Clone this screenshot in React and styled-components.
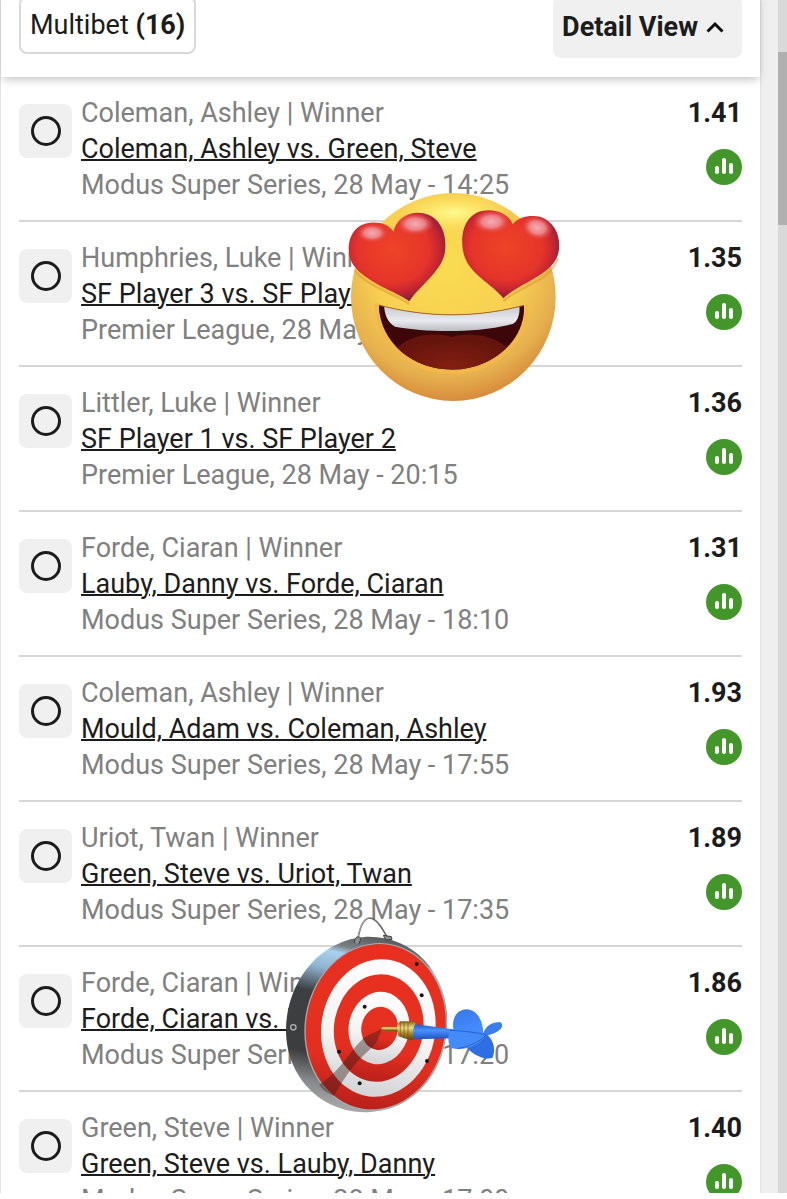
import { useState } from "react";
import styled, { createGlobalStyle } from "styled-components";

const bets = [
  { id: 1, pick: "Coleman, Ashley", match: "Coleman, Ashley vs. Green, Steve", info: "Modus Super Series, 28 May - 14:25", odds: "1.41" },
  { id: 2, pick: "Humphries, Luke", match: "SF Player 3 vs. SF Player 4", info: "Premier League, 28 May - 19:15", odds: "1.35" },
  { id: 3, pick: "Littler, Luke", match: "SF Player 1 vs. SF Player 2", info: "Premier League, 28 May - 20:15", odds: "1.36" },
  { id: 4, pick: "Forde, Ciaran", match: "Lauby, Danny vs. Forde, Ciaran", info: "Modus Super Series, 28 May - 18:10", odds: "1.31" },
  { id: 5, pick: "Coleman, Ashley", match: "Mould, Adam vs. Coleman, Ashley", info: "Modus Super Series, 28 May - 17:55", odds: "1.93" },
  { id: 6, pick: "Uriot, Twan", match: "Green, Steve vs. Uriot, Twan", info: "Modus Super Series, 28 May - 17:35", odds: "1.89" },
  { id: 7, pick: "Forde, Ciaran", match: "Forde, Ciaran vs. Lauby, D", info: "Modus Super Series, 28 May - 17:20", odds: "1.86" },
  { id: 8, pick: "Green, Steve", match: "Green, Steve vs. Lauby, Danny", info: "Modus Super Series, 28 May - 17:00", odds: "1.40" },
];

const HeartEyes = () => (
  <svg viewBox="0 0 750 705" width="250" height="235" aria-hidden="true">
    <defs>
      <radialGradient id="skin" cx="0.47" cy="0.34" r="0.7">
        <stop offset="0" stopColor="#f9dc50" />
        <stop offset="0.5" stopColor="#f8d052" />
        <stop offset="0.78" stopColor="#e6b04e" />
        <stop offset="0.93" stopColor="#d98f3c" />
        <stop offset="1" stopColor="#cc7830" />
      </radialGradient>
      <radialGradient id="shine" cx="0.5" cy="0.5" r="0.5">
        <stop offset="0" stopColor="#fffa90" />
        <stop offset="1" stopColor="#fff06a" stopOpacity="0" />
      </radialGradient>
      <radialGradient id="heart" cx="0.46" cy="0.42" r="0.62">
        <stop offset="0" stopColor="#ee4427" />
        <stop offset="0.6" stopColor="#e5342a" />
        <stop offset="0.76" stopColor="#c92630" />
        <stop offset="0.9" stopColor="#98203a" />
        <stop offset="1" stopColor="#6c1a3c" />
      </radialGradient>
      <radialGradient id="gloss" cx="0.5" cy="0.5" r="0.5">
        <stop offset="0" stopColor="#f3aeb4" />
        <stop offset="0.5" stopColor="#ef9198" stopOpacity="0.85" />
        <stop offset="1" stopColor="#e5443d" stopOpacity="0" />
      </radialGradient>
      <linearGradient id="teeth" x1="0" x2="0" y1="0" y2="1">
        <stop offset="0" stopColor="#c3c6cb" />
        <stop offset="0.6" stopColor="#e9ebee" />
        <stop offset="1" stopColor="#b9bbc2" />
      </linearGradient>
      <radialGradient id="tongue" cx="0.5" cy="0.7" r="0.6">
        <stop offset="0" stopColor="#841f12" />
        <stop offset="1" stopColor="#64140c" />
      </radialGradient>
      <clipPath id="mouthClip">
        <path d="M146 375C290 414 440 414 582 376C588 485 480 569 369 569C250 569 150 490 146 375Z" />
      </clipPath>
    </defs>
    <ellipse cx="370" cy="351" rx="307" ry="312" fill="url(#skin)" />
    <ellipse cx="372" cy="98" rx="165" ry="56" fill="url(#shine)" />
    <path d="M238 372C200 343 110 318 72 270M520 363C570 320 665 300 683 235" fill="none" stroke="#d9922e" strokeWidth="8" opacity="0.45" />
    <path d="M138 370C142 500 250 577 369 577C490 577 592 492 591 371" fill="none" stroke="#f4b849" strokeWidth="9" />
    <g clipPath="url(#mouthClip)">
      <rect x="130" y="360" width="470" height="220" fill="#3d0709" />
      <path d="M190 520C225 460 325 455 365 471C405 455 505 460 545 520L540 600H190Z" fill="url(#tongue)" />
      <path d="M162 374C290 410 440 410 568 376C571 400 564 424 548 432C430 461 290 457 195 440C174 428 163 405 162 374Z" fill="url(#teeth)" />
    </g>
    <path d="M146 375C290 414 440 414 582 376" fill="none" stroke="#a96a23" strokeWidth="3" />
    <path d="M238 364C200 335 110 310 70 255C42 210 57 145 105 131C140 122 175 130 190 155C200 115 240 92 280 100C330 110 352 160 345 215C336 275 270 315 238 364Z" fill="url(#heart)" />
    <path d="M520 355C485 310 420 285 402 225C386 165 405 105 455 93C500 84 538 105 548 133C565 110 600 104 630 110C680 128 694 175 685 220C668 285 570 308 520 355Z" fill="url(#heart)" />
    <ellipse cx="127" cy="159" rx="47" ry="29" fill="url(#gloss)" />
    <ellipse cx="256" cy="132" rx="57" ry="34" fill="url(#gloss)" />
    <ellipse cx="484" cy="125" rx="57" ry="35" fill="url(#gloss)" />
    <ellipse cx="622" cy="143" rx="48" ry="36" fill="url(#gloss)" transform="rotate(15 622 143)" />
  </svg>
);

const DartBoard = () => (
  <svg viewBox="0 0 750 660" width="250" height="220" aria-hidden="true">
    <defs>
      <linearGradient id="rim" x1="0.5" x2="0.3" y1="0" y2="1">
        <stop offset="0" stopColor="#5c6064" />
        <stop offset="0.08" stopColor="#7b8085" />
        <stop offset="0.12" stopColor="#a9d0ee" />
        <stop offset="0.22" stopColor="#8fb4d0" />
        <stop offset="0.36" stopColor="#3d4043" />
        <stop offset="0.7" stopColor="#3c3d3e" />
        <stop offset="0.85" stopColor="#858687" />
        <stop offset="1" stopColor="#b0b0b0" />
      </linearGradient>
      <linearGradient id="red" x1="0" x2="0" y1="0" y2="1">
        <stop offset="0" stopColor="#e7301f" />
        <stop offset="0.7" stopColor="#e42f20" />
        <stop offset="1" stopColor="#b9201a" />
      </linearGradient>
      <linearGradient id="white" x1="0" x2="0" y1="0" y2="1">
        <stop offset="0" stopColor="#fff" />
        <stop offset="0.6" stopColor="#f3f3f3" />
        <stop offset="1" stopColor="#d2d3d5" />
      </linearGradient>
      <linearGradient id="brass" x1="0" x2="0" y1="0" y2="1">
        <stop offset="0" stopColor="#82651c" />
        <stop offset="0.35" stopColor="#f2dc82" />
        <stop offset="0.65" stopColor="#a88526" />
        <stop offset="1" stopColor="#5a4410" />
      </linearGradient>
      <linearGradient id="shaft" x1="0" x2="0" y1="0" y2="1">
        <stop offset="0" stopColor="#2259c4" />
        <stop offset="0.4" stopColor="#4a92ff" />
        <stop offset="1" stopColor="#1e52bb" />
      </linearGradient>
      <linearGradient id="fin" x1="0" x2="0.4" y1="0" y2="1">
        <stop offset="0" stopColor="#3577e8" />
        <stop offset="1" stopColor="#458dff" />
      </linearGradient>
    </defs>
    <path d="M290 95C140 104 48 240 48 375C48 520 160 630 300 621C450 610 531 480 531 345C530 200 430 92 290 95Z" fill="url(#rim)" />
    <path d="M262 112C268 70 280 40 299 39C320 40 337 70 352 97" fill="none" stroke="#66686a" strokeWidth="5" />
    <path d="M262 110C267 72 279 39 299 38" fill="none" stroke="#c5c7c9" strokeWidth="2" />
    <path d="M254 115C252 98 262 91 272 99C271 108 268 113 266 118M340 91L364 95L366 103L347 105Z" fill="#8b8e90" stroke="#3f4143" strokeWidth="3" />
    <ellipse cx="317" cy="366" rx="213" ry="253" transform="rotate(9 317 366)" fill="#a5abb0" />
    <ellipse cx="317" cy="365" rx="209" ry="249" transform="rotate(9 317 365)" fill="url(#red)" />
    <ellipse cx="325" cy="369" rx="171" ry="207" transform="rotate(9 325 369)" fill="url(#white)" />
    <ellipse cx="326" cy="369" rx="134" ry="162" transform="rotate(9 326 369)" fill="url(#red)" />
    <ellipse cx="327" cy="369" rx="91" ry="109" transform="rotate(9 327 369)" fill="url(#white)" />
    <ellipse cx="329" cy="370" rx="55" ry="65" transform="rotate(9 329 370)" fill="url(#red)" />
    <path d="M335 371L312 383C284 390 270 410 250 433C218 477 182 520 148 538C155 554 174 566 192 573C210 545 220 520 256 477C286 442 321 421 326 397Z" fill="#371b1b" opacity="0.42" />
    <circle cx="70" cy="367" r="8" fill="#404142" stroke="#b1b1b1" strokeWidth="4" />
    <g fill="#171717">
      <circle cx="440" cy="177" r="6" />
      <circle cx="455" cy="271" r="6" />
      <circle cx="284" cy="305" r="6" />
      <circle cx="207" cy="440" r="6" />
      <circle cx="269" cy="535" r="6" />
      <circle cx="471" cy="468" r="6" />
    </g>
    <path d="M333 370L340 364L385 366V379L340 377Z" fill="url(#brass)" />
    <path d="M381 359L390 349L432 349L440 359L434 403L419 405L385 394Z" fill="url(#brass)" />
    <path d="M391 351V394M402 350V399M414 350V402" stroke="#765718" strokeWidth="2" />
    <path d="M436 358L550 373L640 382V393L545 400L432 403C428 388 428 371 436 358Z" fill="url(#shaft)" />
    <path d="M588 425C615 397 635 388 652 389C672 407 678 438 667 459C647 464 615 456 588 425Z" fill="#2f6ee2" />
    <path d="M640 386C645 363 668 349 692 352C707 368 680 386 648 392Z" fill="#3a7eec" />
    <path d="M550 374C545 335 563 314 590 313C622 313 640 350 640 387C621 380 584 374 550 374Z" fill="url(#fin)" />
    <path d="M538 374C580 370 627 379 649 389C630 420 585 440 543 429C533 414 534 392 538 374Z" fill="#438bfb" />
    <path d="M540 376C590 378 623 384 648 389M562 431C600 424 630 410 648 390" fill="none" stroke="#2563cb" strokeWidth="3" />
  </svg>
);

const App = () => {
  const [selected, setSelected] = useState([]);
  const toggle = (id) => {
    setSelected(selected.includes(id) ? selected.filter((s) => s !== id) : [...selected, id]);
  };
  return (
    <Page>
      <GlobalStyle />
      <Shell>
        <Panel>
          <Header>
            <MultibetButton type="button">
              <span>
                Multibet <b>(16)</b>
              </span>
            </MultibetButton>
            <DetailButton type="button">
              Detail View
              <svg width="18" height="12" viewBox="0 0 18 12" aria-hidden="true">
                <path d="M1.5 10.5L9 3L16.5 10.5" fill="none" stroke="#111" strokeWidth="3" />
              </svg>
            </DetailButton>
          </Header>
          <BetList>
            {bets.map((bet) => (
              <BetRow key={bet.id}>
                <Tick>
                  <input
                    type="checkbox"
                    aria-label={bet.match}
                    checked={selected.includes(bet.id)}
                    onChange={() => toggle(bet.id)}
                  />
                </Tick>
                <Details>
                  <Line>{bet.pick} | Winner</Line>
                  <MatchLink href="#match">{bet.match}</MatchLink>
                  <Line>{bet.info}</Line>
                </Details>
                <Side>
                  <Odds>{bet.odds}</Odds>
                  <StatsButton type="button" aria-label="Statistics">
                    <svg width="18" height="18" viewBox="0 0 18 18" aria-hidden="true">
                      <path d="M2 10V14M9 2V14M16 7V14" stroke="#fff" strokeWidth="4" strokeLinecap="round" />
                    </svg>
                  </StatsButton>
                </Side>
              </BetRow>
            ))}
          </BetList>
        </Panel>
        <Gutter />
        <Track>
          <Thumb />
        </Track>
        <Sticker $left={330} $top={180}>
          <HeartEyes />
        </Sticker>
        <Sticker $left={270} $top={905}>
          <DartBoard />
        </Sticker>
      </Shell>
    </Page>
  );
};

const GlobalStyle = createGlobalStyle`
  * {
    box-sizing: border-box;
  }
  body {
    margin: 0;
    background: #fff;
    color: #1c1c1c;
    font-family: Roboto, "Liberation Sans", sans-serif;
    font-size: 27px;
    line-height: 36px;
  }
  button {
    font: inherit;
    color: inherit;
    cursor: pointer;
  }
`;

const Page = styled.div`
  height: 100vh;
  padding-bottom: 6px;
`;

const Shell = styled.div`
  position: relative;
  display: flex;
  height: 100%;
  overflow: hidden;
`;

const Panel = styled.main`
  flex: 1;
  min-width: 0;
  border-left: 1px solid #e4e4e4;
`;

const Header = styled.header`
  position: relative;
  display: flex;
  justify-content: space-between;
  align-items: flex-end;
  margin-top: -8px;
  padding: 4px 18px 19px;
  background: #fff;
  box-shadow: 0 4px 9px -2px rgba(0, 0, 0, 0.26);
`;

const HeaderButton = styled.button`
  display: flex;
  align-items: center;
  height: 62px;
  border-radius: 8px;
`;

const MultibetButton = styled(HeaderButton)`
  height: 58px;
  margin-bottom: 4px;
  padding: 0 9px;
  border: 2px solid #d9d9d9;
  background: #fff;
  b {
    font-weight: 700;
  }
`;

const DetailButton = styled(HeaderButton)`
  gap: 8px;
  padding: 0 18px 0 9px;
  border: none;
  background: #f0f0f0;
  font-weight: 700;
`;

const BetList = styled.ul`
  list-style: none;
  margin: 0 18px;
  padding: 0;
`;

const BetRow = styled.li`
  display: flex;
  align-items: flex-start;
  gap: 9px;
  padding: 18px 0 17px;
  border-bottom: 2px solid #d6d6d6;
`;

const Tick = styled.label`
  display: flex;
  align-items: center;
  justify-content: center;
  width: 53px;
  height: 54px;
  margin-top: 9px;
  border-radius: 8px;
  background: #f0f0f0;
  cursor: pointer;
  input {
    appearance: none;
    width: 30px;
    height: 30px;
    margin: 0;
    border: 3px solid #1c1c1c;
    border-radius: 50%;
    cursor: pointer;
  }
  input:checked {
    background: #43962a;
  }
`;

const Details = styled.div`
  display: flex;
  flex: 1;
  flex-direction: column;
  align-items: flex-start;
  min-width: 0;
  white-space: nowrap;
`;

const Line = styled.div`
  color: #808080;
`;

const MatchLink = styled.a`
  color: #1c1c1c;
  text-decoration: underline;
  text-decoration-thickness: 2px;
`;

const Side = styled.div`
  display: flex;
  flex-direction: column;
  align-items: flex-end;
  gap: 18px;
`;

const Odds = styled.strong`
  font-weight: 700;
`;

const StatsButton = styled.button`
  display: flex;
  align-items: center;
  justify-content: center;
  width: 36px;
  height: 36px;
  padding: 0;
  border: none;
  border-radius: 50%;
  background: #43962a;
`;

const Gutter = styled.div`
  width: 18px;
  border-left: 1px solid #e2e2e2;
  background: #efefef;
`;

const Track = styled.div`
  width: 9px;
  padding-top: 52px;
  background: #d9d9d9;
`;

const Thumb = styled.div`
  height: 173px;
  background: #b0b0b0;
`;

const Sticker = styled.div`
  position: absolute;
  left: ${(props) => props.$left}px;
  top: ${(props) => props.$top}px;
  pointer-events: none;
  svg {
    display: block;
  }
`;

export default App;
